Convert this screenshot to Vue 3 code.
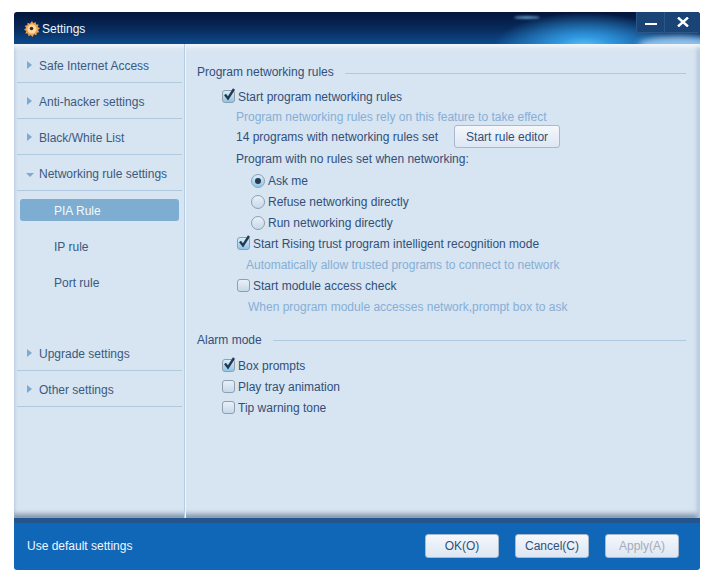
<script setup>
const topItems = [
  { label: 'Safe Internet Access' },
  { label: 'Anti-hacker settings' },
  { label: 'Black/White List' },
  { label: 'Networking rule settings', open: true }
]
const subItems = [
  { label: 'PIA Rule', active: true },
  { label: 'IP rule' },
  { label: 'Port rule' }
]
const bottomItems = [{ label: 'Upgrade settings' }, { label: 'Other settings' }]
const alarms = [
  { label: 'Box prompts', on: true },
  { label: 'Play tray animation' },
  { label: 'Tip warning tone' }
]
const radios = [
  { label: 'Ask me', on: true },
  { label: 'Refuse networking directly' },
  { label: 'Run networking directly' }
]
</script>

<template>
  <div class="page">
    <div class="window">
      <header class="titlebar">
        <div class="glow"></div>
        <div class="streak"></div>
        <div class="glow2"></div>
        <svg class="gear" width="16" height="16" viewBox="0 0 16 16">
          <path d="M8 0l1.300 2.200L11.600 1l.4 2.600 2.600-.1-.9 2.400L16 7.300l-2 1.600 1.300 2.300-2.600.5-.2 2.600-2.400-1L8.400 16l-1.600-2.100-2.300 1.300-.5-2.600-2.600-.1 1-2.400L0 8.700l2.100-1.600L.8 4.800l2.600-.5L3.600 1.700l2.400 1z" fill="#f0a24a"/>
          <circle cx="8" cy="8" r="4.500" fill="#fbd9a0"/>
          <circle cx="7.500" cy="7.500" r="1.800" fill="#3a2a20"/>
        </svg>
        <span class="title">Settings</span>
        <div class="winbtns">
          <button class="winbtn min">
            <svg width="12" height="4" viewBox="0 0 12 4"><rect y="1" width="12" height="2" fill="#fff"/></svg>
          </button>
          <button class="winbtn close">
            <svg width="12" height="10" viewBox="0 0 12 10"><path d="M1 .5l10 9M11 .5l-10 9" stroke="#fff" stroke-width="2.400" fill="none"/></svg>
          </button>
        </div>
      </header>

      <div class="body">
        <nav class="sidebar">
          <div v-for="i in topItems" :key="i.label" class="nav-item">
            <span :class="i.open ? 'arrow-down' : 'arrow-right'"></span>{{ i.label }}
          </div>
          <div class="subs">
            <div v-for="s in subItems" :key="s.label" class="sub" :class="{ active: s.active }">
              <span class="sub-label">{{ s.label }}</span>
            </div>
          </div>
          <div v-for="i in bottomItems" :key="i.label" class="nav-item">
            <span class="arrow-right"></span>{{ i.label }}
          </div>
        </nav>

        <main class="content">
          <div class="heading"><span>Program networking rules</span><i></i></div>

          <div class="row in1 first">
            <span class="check on"><svg width="14" height="14" viewBox="0 0 14 14"><path d="M3 6.500l3 4 6-9.500" stroke="#27384f" stroke-width="2.400" fill="none"/></svg></span>
            Start program networking rules
          </div>
          <div class="row hint in2 short">Program networking rules rely on this feature to take effect</div>
          <div class="row in2">14 programs with networking rules set<button class="btn editor">Start rule editor</button></div>
          <div class="row in2 tall">Program with no rules set when networking:</div>

          <div v-for="r in radios" :key="r.label" class="row in3">
            <span class="radio" :class="{ on: r.on }"></span>{{ r.label }}
          </div>

          <div class="row in4">
            <span class="check on"><svg width="14" height="14" viewBox="0 0 14 14"><path d="M3 6.500l3 4 6-9.500" stroke="#27384f" stroke-width="2.400" fill="none"/></svg></span>
            Start Rising trust program intelligent recognition mode
          </div>
          <div class="row hint in5">Automatically allow trusted programs to connect to network</div>
          <div class="row in4"><span class="check"></span>Start module access check</div>
          <div class="row hint in6">When program module accesses network,prompt box to ask</div>

          <div class="heading alarm"><span>Alarm mode</span><i></i></div>
          <div v-for="a in alarms" :key="a.label" class="row in1">
            <span class="check" :class="{ on: a.on }">
              <svg v-if="a.on" width="14" height="14" viewBox="0 0 14 14"><path d="M3 6.500l3 4 6-9.500" stroke="#27384f" stroke-width="2.400" fill="none"/></svg>
            </span>
            {{ a.label }}
          </div>
        </main>
      </div>

      <footer class="footer">
        <span class="default">Use default settings</span>
        <div class="actions">
          <button class="btn foot">OK(O)</button>
          <button class="btn foot">Cancel(C)</button>
          <button class="btn foot disabled">Apply(A)</button>
        </div>
      </footer>
    </div>
  </div>
</template>

<style>
html, body { margin: 0; background: #fff; }
</style>

<style scoped>
.page {
  width: 719px;
  height: 585px;
  padding: 12px 19px 15px 14px;
  box-sizing: border-box;
  font-family: "Liberation Sans", Arial, sans-serif;
  font-size: 12px;
  overflow: hidden;
}
.window {
  height: 558px;
  display: flex;
  flex-direction: column;
  border-radius: 3px;
  overflow: hidden;
}
.titlebar {
  position: relative;
  height: 32px;
  flex: none;
  display: flex;
  align-items: center;
  padding: 1px 0 0 10px;
  box-sizing: border-box;
  background: linear-gradient(#03153a, #08295a 50%, #0d4a8c);
  overflow: hidden;
}
.glow {
  position: absolute;
  left: 480px;
  top: -8px;
  width: 180px;
  height: 70px;
  background: radial-gradient(ellipse 50% 50% at 50% 62%, #62c8f8 0%, #2f96de 32%, rgba(18, 90, 165, 0) 100%);
}
.streak {
  position: absolute;
  left: 500px;
  top: 4px;
  width: 26px;
  height: 3px;
  border-radius: 50%;
  background: #5f93c0;
  filter: blur(1px);
}
.glow2 {
  position: absolute;
  right: -18px;
  bottom: -10px;
  width: 80px;
  height: 18px;
  border-radius: 50%;
  background: #8fc0ea;
  filter: blur(3px);
}
.gear { position: relative; margin-right: 2px; }
.title { position: relative; color: #f2f6fb; font-size: 12px; }
.winbtns {
  position: absolute;
  right: 0;
  top: 0;
  display: flex;
  height: 21px;
  box-sizing: border-box;
  border: 1px solid #2b5686;
  border-top: 0;
  border-right: 0;
  border-radius: 0 0 3px 3px;
  background: #1b4476;
}
.winbtn {
  padding: 0;
  border: 0;
  background: transparent;
  display: flex;
  align-items: center;
  justify-content: center;
}
.min { width: 27px; padding-top: 3px; }
.close { width: 36px; border-left: 1px solid #2b5686; }
.body {
  flex: 1;
  display: flex;
  min-height: 0;
  background: #d7e4f1;
  box-shadow: inset 0 6px 5px -3px #f4f8fc, inset -5px 0 4px -2px #b3c6da, inset 0 -7px 5px -3px #7f94ab, inset 4px 0 3px -3px #b9cbde;
}
.sidebar {
  width: 172px;
  flex: none;
  padding: 3px 3px 0 3px;
  box-sizing: border-box;
  border-right: 1px solid #eff5fa;
  box-shadow: inset -1px 0 0 #b4cde2;
}
.nav-item {
  height: 36px;
  box-sizing: border-box;
  border-bottom: 1px solid #afc9df;
  display: flex;
  align-items: center;
  color: #3a5a80;
  padding: 3px 0 0 10px;
}
.arrow-right {
  width: 0;
  height: 0;
  margin: 0 7px 3px 0;
  border-left: 5px solid #7faad0;
  border-top: 4px solid transparent;
  border-bottom: 4px solid transparent;
}
.arrow-down {
  width: 0;
  height: 0;
  margin: 2px 5px 0 -1px;
  border-top: 4px solid #7faad0;
  border-left: 4px solid transparent;
  border-right: 4px solid transparent;
}
.subs { padding: 8px 3px 42px 3px; }
.sub {
  height: 22px;
  box-sizing: border-box;
  margin-bottom: 14px;
  display: flex;
  align-items: center;
  padding: 2px 0 0 34px;
  border-radius: 3px;
  color: #3a5a80;
}
.sub:last-child { margin-bottom: 0; }
.sub.active { background: #7dadd1; color: #f3f8fc; }
.content {
  flex: 1;
  padding: 21px 14px 0 11px;
  color: #30507a;
  min-width: 0;
}
.heading {
  display: flex;
  align-items: center;
  height: 14px;
}
.heading i {
  flex: 1;
  height: 1px;
  margin: 2px 0 0 11px;
  background: #afc9df;
}
.heading.alarm { margin-top: 15px; margin-bottom: 9px; }
.heading.alarm span { padding-top: 2px; }
.row {
  height: 21px;
  display: flex;
  align-items: center;
  white-space: nowrap;
  color: #30507a;
}
.first { margin-top: 7px; }
.short { height: 19px; }
.tall { height: 23px; }
.hint { color: #86afd6; }
.in1 { margin-left: 25px; }
.in2 { margin-left: 39px; }
.in3 { margin-left: 54px; }
.in4 { margin-left: 40px; }
.in5 { margin-left: 49px; }
.in6 { margin-left: 51px; }
.check {
  width: 11px;
  height: 11px;
  margin-right: 3px;
  flex: none;
  position: relative;
  border: 1px solid #8f9fb0;
  border-radius: 3px;
  background: linear-gradient(#e9f0f7, #c7d9ea);
}
.check.on { background: linear-gradient(#d6eefa, #8fc6e8); }
.check svg { position: absolute; left: -1px; top: -3px; }
.radio {
  width: 12px;
  height: 12px;
  margin-right: 3px;
  flex: none;
  position: relative;
  border: 1px solid #8f9fb0;
  border-radius: 50%;
  background: linear-gradient(#e9f0f7, #c7d9ea);
}
.radio.on { background: linear-gradient(#d6eefa, #8fc6e8); }
.radio.on::after {
  content: "";
  position: absolute;
  left: 3px;
  top: 3px;
  width: 6px;
  height: 6px;
  border-radius: 50%;
  background: #27384f;
}
.btn {
  font: inherit;
  color: #30507a;
  border: 1px solid #a9b9cb;
  border-radius: 3px;
  background: linear-gradient(#f5f8fc, #dde6f2);
  padding: 0;
}
.editor { flex: none; width: 106px; height: 23px; margin-left: 16px; }
.footer {
  flex: none;
  height: 52px;
  box-sizing: border-box;
  display: flex;
  align-items: center;
  justify-content: space-between;
  background: #1167b7;
  box-shadow: inset 0 5px 0 #24558f;
  padding: 3px 21px 0 13px;
}
.default { color: #f1f6fb; }
.actions { display: flex; gap: 16px; }
.foot { width: 74px; height: 24px; }
.foot.disabled { color: #a3acb8; }
</style>
